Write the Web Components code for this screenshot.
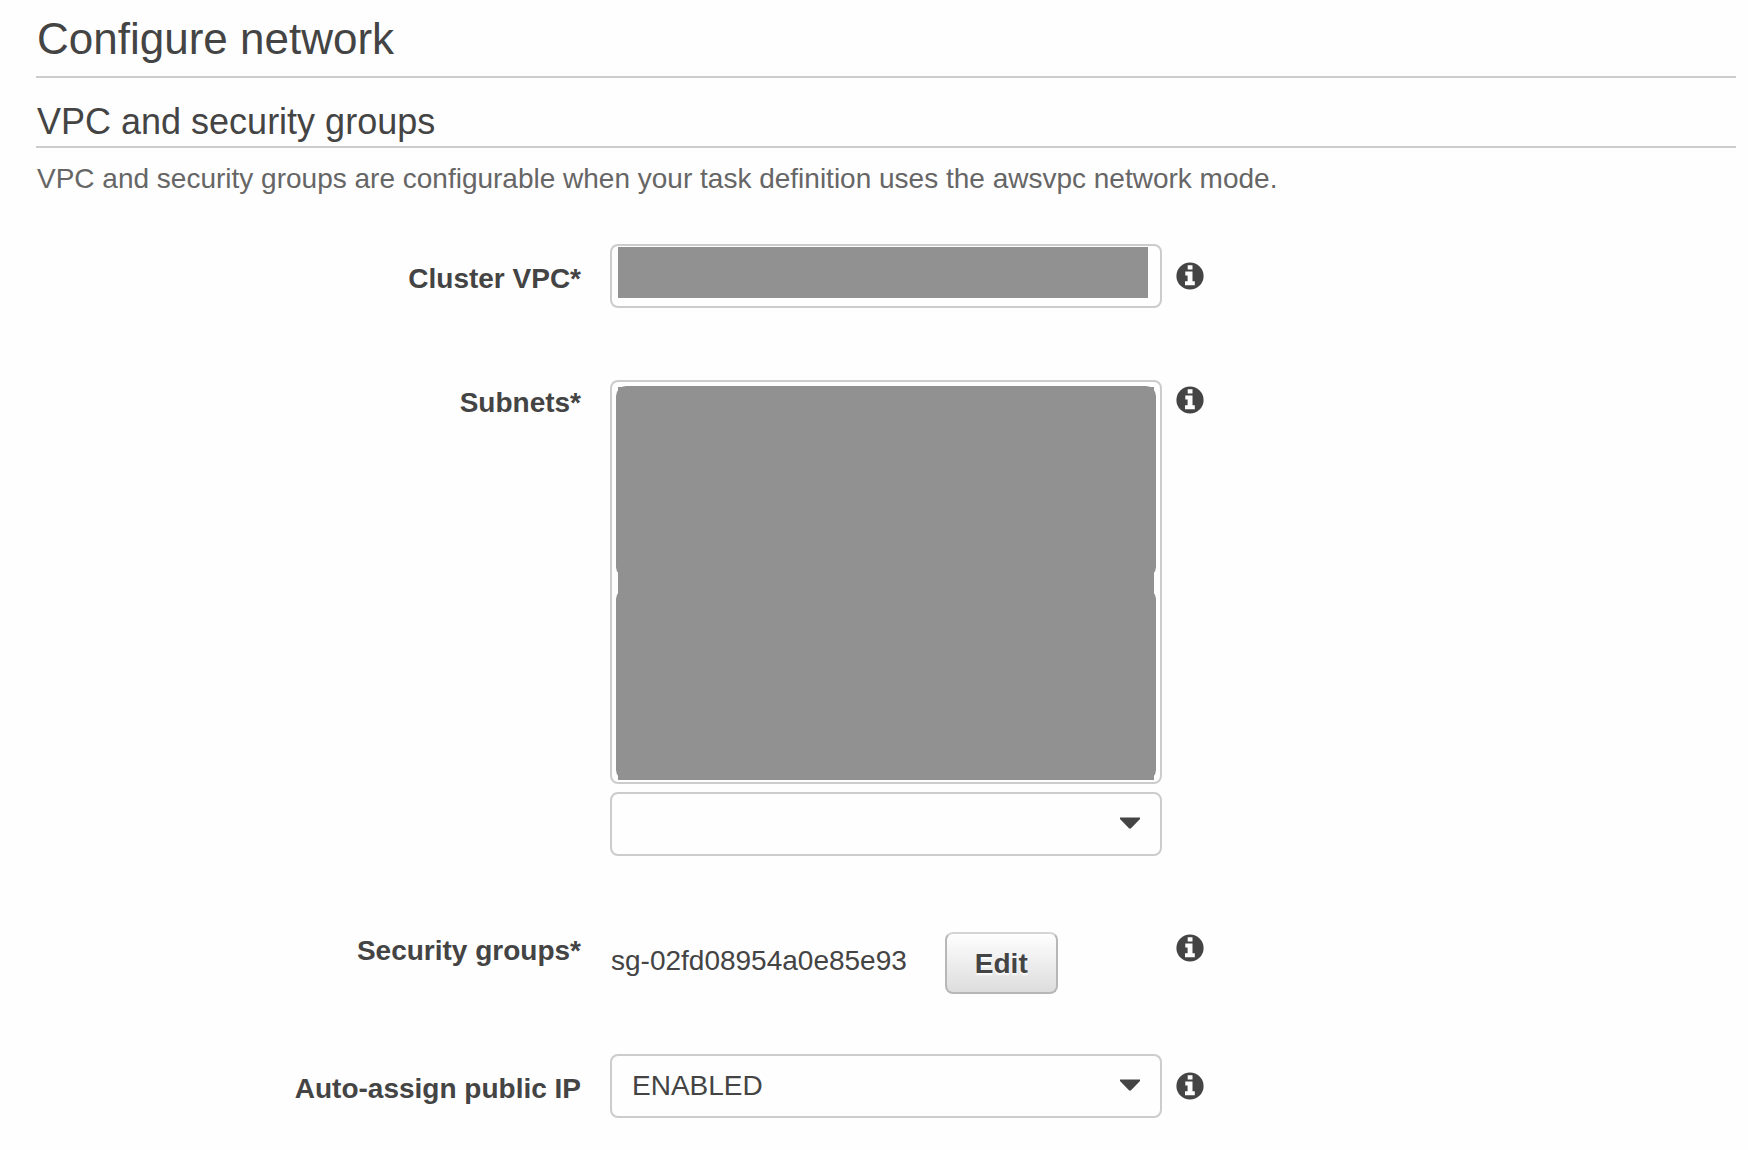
<!DOCTYPE html>
<html lang="en">
<head>
<meta charset="utf-8">
<title>Configure network</title>
<style>
  body { margin: 0; background: #fefefe; color: #444; font: 28px/32px "Liberation Sans", Arial, sans-serif; }
</style>
</head>
<body>
<network-form></network-form>
<script>
class SectionHeading extends HTMLElement {
  constructor() {
    super();
    this.attachShadow({ mode: "open" }).innerHTML = `
      <style>
        :host { display: block; border-bottom: 2px solid #ccc; }
        ::slotted(h1), ::slotted(h2) { margin: 0; font-weight: 400; }
        ::slotted(h1) { font-size: 44px; line-height: 52px; padding: 13px 1px 11px; }
        ::slotted(h2) { font-size: 36px; line-height: 44px; padding: 22px 1px 2px; }
      </style>
      <slot></slot>`;
  }
}
customElements.define("section-heading", SectionHeading);

class InfoButton extends HTMLElement {
  constructor() {
    super();
    this.attachShadow({ mode: "open" }).innerHTML = `
      <style>
        :host { display: block; }
        button { display: block; width: 28px; height: 28px; margin: 0; padding: 0; border: 0; background: none; color: inherit; cursor: pointer; }
        svg { display: block; }
      </style>
      <button type="button" aria-label="Info">
        <svg width="28" height="28" viewBox="0 0 28 28" aria-hidden="true">
          <circle cx="14" cy="14" r="13.6" fill="currentColor"/>
          <path fill="#fefefe" d="M11.7 3.3h4.8v4.2h-4.8zM9.3 9.4h7.2v9.8h2.3v4.1H9v-4.1h2.6v-5.7H9.3z"/>
        </svg>
      </button>`;
  }
}
customElements.define("info-button", InfoButton);

class FormRow extends HTMLElement {
  constructor() {
    super();
    this.attachShadow({ mode: "open" }).innerHTML = `
      <style>
        :host { display: grid; grid-template-columns: 32% minmax(0, 552px) 28px; align-items: start; }
        .name { padding: 19px 0 0; margin-right: -1px; text-align: right; font-weight: 700; }
        .control { margin-left: 30px; margin-right: -30px; }
        :host([inset]) .control { padding-top: 12px; }
        :host([inline]) .control { padding-top: 16px; }
        info-button { margin-left: 44px; padding-top: 18px; }
      </style>
      <div class="name"><slot name="label"></slot></div>
      <div class="control"><slot></slot></div>
      <info-button></info-button>`;
  }
}
customElements.define("form-row", FormRow);

class DropDown extends HTMLElement {
  constructor() {
    super();
    this.attachShadow({ mode: "open" }).innerHTML = `
      <style>
        :host { display: grid; }
        ::slotted(select) {
          grid-area: 1 / 1; appearance: none; width: 100%; height: 64px; box-sizing: border-box; margin: 0;
          padding: 0 60px 0 20px; border: 2px solid #ccc; border-radius: 8px;
          background: #fefefe; color: inherit; font: inherit;
        }
        svg { grid-area: 1 / 1; justify-self: end; margin: 25px 22px 0 0; pointer-events: none; z-index: 1; }
        .mask { display: none; grid-area: 1 / 1; z-index: 1; height: 51px; margin: 3px 14px 0 8px; background: #919191; }
        :host([masked]) .mask { display: block; }
        :host([masked]) svg { display: none; }
      </style>
      <slot></slot>
      <svg width="20" height="12" viewBox="0 0 20 12" aria-hidden="true"><path fill="currentColor" d="M0 .5h20v1.4L10.8 11.6H9.2L0 1.9z"/></svg>
      <div class="mask"></div>`;
  }
}
customElements.define("drop-down", DropDown);

class SubnetList extends HTMLElement {
  constructor() {
    super();
    this.attachShadow({ mode: "open" }).innerHTML = `
      <style>
        :host { display: block; border: 2px solid #ccc; border-radius: 8px; padding: 4px 4px 2px; margin-bottom: 8px; }
        ul { display: grid; gap: 12px; list-style: none; margin: 0; padding: 0; background: linear-gradient(#919191, #919191) 2px 1px / calc(100% - 4px) 100% no-repeat; }
        li { height: 191px; border-radius: 10px; background: #919191; }
      </style>
      <ul><li></li><li></li></ul>`;
  }
}
customElements.define("subnet-list", SubnetList);

class NetworkForm extends HTMLElement {
  constructor() {
    super();
    this.attachShadow({ mode: "open" }).innerHTML = `
      <style>
        :host { display: block; padding: 0 12px 32px 36px; }
        p { margin: 0; padding: 15px 1px 49px; color: #666; }
        form { display: flex; flex-direction: column; gap: 60px; }
        .groups { display: flex; align-items: center; gap: 38px; padding-left: 1px; }
        .groups button {
          height: 62px; padding: 2px 28px 0; border: 2px solid #b7b7b7; border-top-color: #d5d5d5; border-radius: 8px;
          background: linear-gradient(#fefefe, #ddd); color: inherit; font: inherit; font-weight: 700;
          text-shadow: 0 2px 2px #fefefe; cursor: pointer;
        }
        .groups span { padding-bottom: 4px; }
      </style>
      <section-heading><h1>Configure network</h1></section-heading>
      <section-heading><h2>VPC and security groups</h2></section-heading>
      <p>VPC and security groups are configurable when your task definition uses the awsvpc network mode.</p>
      <form>
        <form-row>
          <label slot="label" for="vpc">Cluster VPC*</label>
          <drop-down masked><select id="vpc"><option></option></select></drop-down>
        </form-row>
        <form-row inset>
          <label slot="label" for="subnets">Subnets*</label>
          <subnet-list></subnet-list>
          <drop-down><select id="subnets"><option></option></select></drop-down>
        </form-row>
        <form-row inline>
          <label slot="label" for="edit-groups">Security groups*</label>
          <div class="groups"><span>sg-02fd08954a0e85e93</span><button type="button" id="edit-groups">Edit</button></div>
        </form-row>
        <form-row>
          <label slot="label" for="public-ip">Auto-assign public IP</label>
          <drop-down><select id="public-ip"><option>ENABLED</option><option>DISABLED</option></select></drop-down>
        </form-row>
      </form>`;
  }
}
customElements.define("network-form", NetworkForm);
</script>
</body>
</html>
